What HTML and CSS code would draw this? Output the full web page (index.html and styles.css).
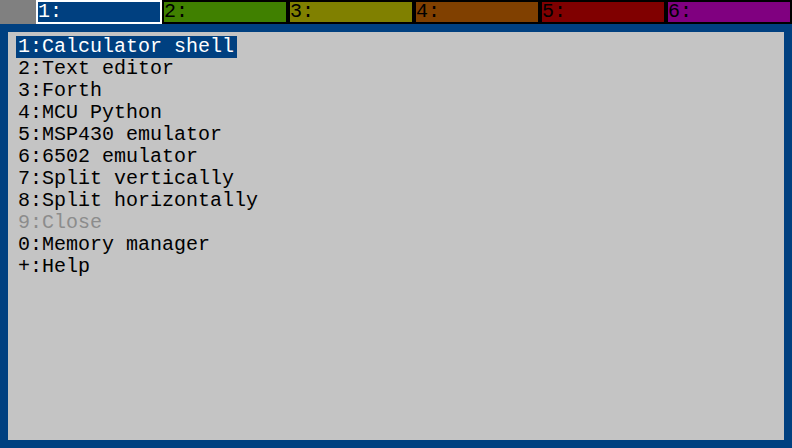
FILE: index.html
```html
<!DOCTYPE html>
<html>
<head>
<meta charset="utf-8">
<link rel="stylesheet" href="styles.css">
</head>
<body>
<div class="screen">
  <div class="tabbar">
    <div class="corner"></div>
    <div class="tab t1 active">1:</div>
    <div class="tab t2">2:</div>
    <div class="tab t3">3:</div>
    <div class="tab t4">4:</div>
    <div class="tab t5">5:</div>
    <div class="tab t6">6:</div>
  </div>
  <div class="frame">
    <div class="content">
      <ul class="menu">
        <li class="item selected">1:Calculator shell</li>
        <li class="item">2:Text editor</li>
        <li class="item">3:Forth</li>
        <li class="item">4:MCU Python</li>
        <li class="item">5:MSP430 emulator</li>
        <li class="item">6:6502 emulator</li>
        <li class="item">7:Split vertically</li>
        <li class="item">8:Split horizontally</li>
        <li class="item disabled">9:Close</li>
        <li class="item">0:Memory manager</li>
        <li class="item">+:Help</li>
      </ul>
    </div>
  </div>
</div>
</body>
</html>
```

FILE: styles.css
```css
html, body {
  margin: 0;
  padding: 0;
  background: #004080;
}
.screen {
  width: 792px;
  height: 448px;
  display: flex;
  flex-direction: column;
  font-family: "Liberation Mono", "DejaVu Sans Mono", monospace;
  font-size: 20px;
}
.tabbar {
  display: flex;
  height: 24px;
  flex: none;
}
.corner {
  width: 36px;
  background: #808080;
}
.tab {
  width: 126px;
  box-sizing: border-box;
  border: 2px solid #000;
  color: #000;
  line-height: 20px;
  padding-left: 0;
  overflow: hidden;
}
.tab.active {
  border-color: #fff;
  color: #fff;
}
.t1 { background: #004080; }
.t2 { background: #408000; }
.t3 { background: #808000; }
.t4 { background: #804000; }
.t5 { background: #800000; }
.t6 { background: #800080; }
.frame {
  flex: 1;
  background: #004080;
  padding: 8px;
  display: flex;
}
.content {
  flex: 1;
  background: #c4c4c4;
  padding: 4px 8px;
}
.menu {
  list-style: none;
  margin: 0;
  padding: 0;
  display: flex;
  flex-direction: column;
  align-items: flex-start;
}
.item {
  height: 22px;
  line-height: 22px;
  padding: 0 3px 0 2px;
  color: #000;
  white-space: pre;
}
.item.selected {
  background: #004080;
  color: #fff;
}
.item.disabled {
  color: #8c8c8c;
}
```
